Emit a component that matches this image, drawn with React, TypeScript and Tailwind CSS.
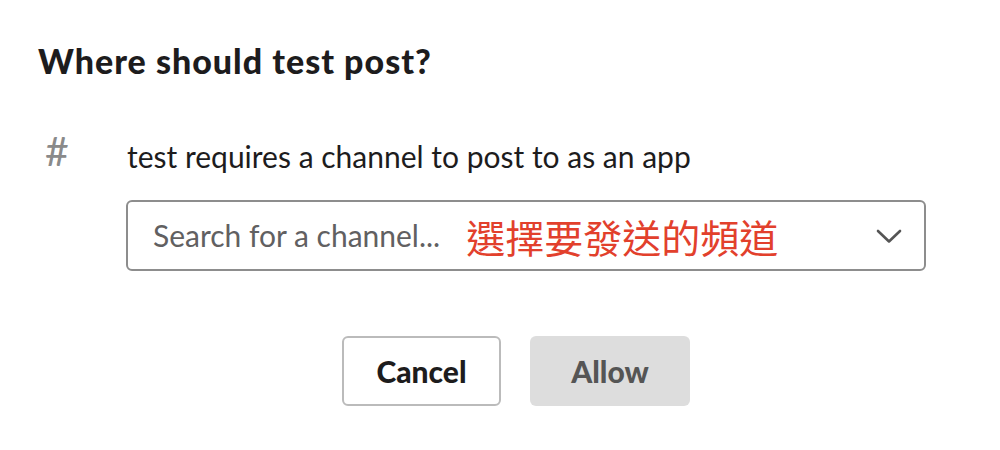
export default function App() {
  return (
    <div className="w-[1000px] h-[450px] bg-white relative overflow-hidden" style={{ fontFamily: 'Lato, "Noto Sans CJK TC", sans-serif' }}>
      <div className="pl-[38px] pt-[41px]">
        <h2 className="text-[34px] leading-[40px] font-black tracking-[1px] text-[#1d1c1d]">Where should test post?</h2>
      </div>

      {/* channel row */}
      <div className="flex items-baseline mt-[54px]">
        <div className="w-[127px] pl-[45px] text-[41px] leading-[36px] text-[#8a8a8a] relative -top-[2px]">#</div>
        <div className="text-[30px] leading-[36px] text-[#1d1c1d]">test requires a channel to post to as an app</div>
      </div>

      <div className="ml-[126px] mt-[26px] w-[800px] h-[71px] border-2 border-[#8d8d8d] rounded-[6px] flex items-center pl-[25px] pr-[22px]">
        <span className="text-[30px] text-[#616061]">Search for a channel...</span>
        <span className="ml-[26px] text-[39px] leading-[44px] text-[#e2402c]" style={{ fontFamily: '"Noto Sans CJK TC", sans-serif' }}>選擇要發送的頻道</span>
        <svg className="ml-auto" width="26" height="16" viewBox="0 0 26 16" fill="none">
          <path d="M2 3 L13 13.5 L24 3" stroke="#555" strokeWidth="2.6" strokeLinecap="round" strokeLinejoin="round" />
        </svg>
      </div>

      <div className="flex gap-[29px] pl-[342px] mt-[65px]">
        <button className="w-[159px] h-[70px] border-2 border-[#bbbbbb] rounded-[6px] text-[30px] font-black text-[#1d1c1d]">Cancel</button>
        <button className="w-[160px] h-[70px] rounded-[6px] bg-[#dddddd] text-[30px] font-black text-[#555555]">Allow</button>
      </div>
    </div>
  );
}
